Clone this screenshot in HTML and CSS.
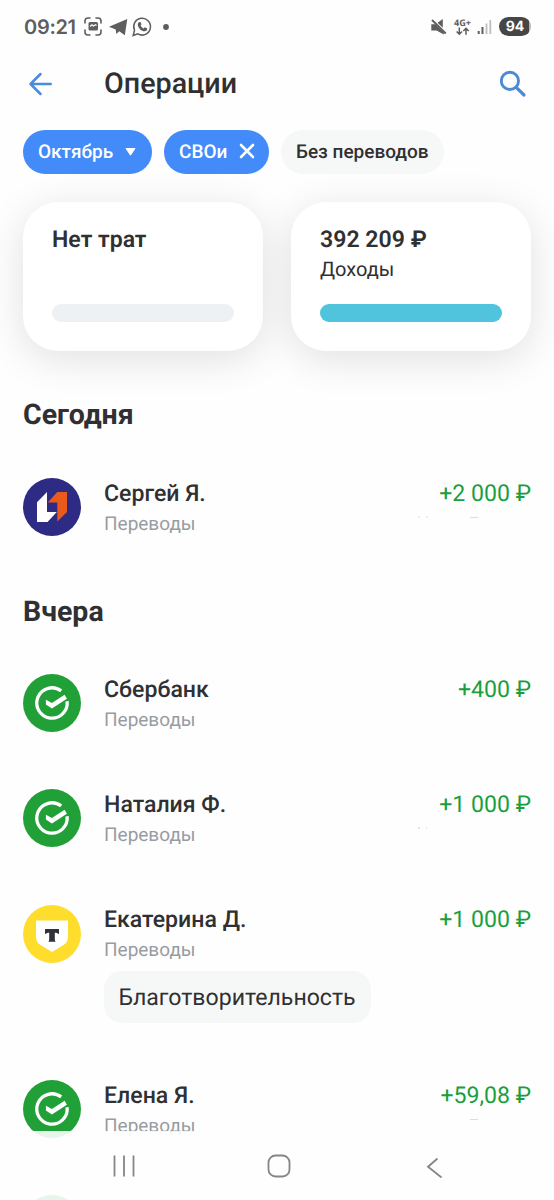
FILE: index.html
```html
<!DOCTYPE html>
<html lang="ru">
<head>
<meta charset="utf-8">
<title>Операции</title>
<link rel="stylesheet" href="styles.css">
</head>
<body>
<svg class="defs" width="0" height="0">
  <symbol id="sber" viewBox="0 0 58 58">
    <circle cx="29" cy="29" r="29" fill="#21a038"/>
    <path d="M38.200 16.900A15.200 15.200 0 1 0 44.100 27.300" fill="none" stroke="#fff" stroke-width="3.300"/>
    <path d="M22.900 25.800v4.800l6 3.800 15-9.700-2.300-4-12.700 8.300z" fill="#fff"/>
    <path d="M39.500 17.200l3.200 2.800" stroke="#21a038" stroke-width="1.200"/>
  </symbol>
</svg>
<div class="screen">
  <div class="status">
    <span class="clock">09:21</span>
    <svg class="status-icons" width="96" height="24" viewBox="0 0 96 24">
      <path d="M2 8V6q0-3 3-3h2M13 3h2q3 0 3 3v2M18 15v2q0 3-3 3h-2M7 20H5q-3 0-3-3v-2" fill="none" stroke="#5e5e5e" stroke-width="1.600" stroke-linecap="round"/>
      <rect x="5.500" y="7" width="9.500" height="8.500" rx="1.500" fill="#5e5e5e"/>
      <path d="M7 11.500l2-1.700 1.500 1.200 2-1.400 1 .9" fill="none" stroke="#fff" stroke-width="1.100"/>
      <path d="M26 11.700L44.300 4 41.800 20.300 36.300 16.200 33.400 19 32.700 14.600z" fill="#5e5e5e"/>
      <path d="M50.200 20.500l1.300-5.200a8.400 8.400 0 1 1 3.300 3.600z" fill="none" stroke="#5e5e5e" stroke-width="1.500"/>
      <path d="M56 7.200c.8-.5 1.600-.2 1.900.5l.6 1.600-.9 1.300c.6 1.300 1.700 2.300 3 2.900l1.200-1.200 2 1c.7.6.4 1.900-.5 2.500-1.100.8-2.700.6-4.500-.4-1.800-1-3.200-2.700-3.800-4.500-.5-1.700-.2-2.900 1-3.700z" fill="#5e5e5e"/>
      <circle cx="83" cy="12" r="2.900" fill="#5e5e5e"/>
    </svg>
    <svg class="status-right" width="75" height="24" viewBox="0 0 75 24">
      <path d="M1.300 9.200h4l8.600 8.400v2L6.500 15.600H1.300zM7.500 7.800L12.800 4v8.700z" fill="#5e5e5e"/>
      <path d="M2 5L15.800 18.500" stroke="#5e5e5e" stroke-width="1.900"/>
      <text x="24" y="10.500" class="net" textLength="17" lengthAdjust="spacingAndGlyphs">4G+</text>
      <path d="M29.300 12.500v6.700M26.600 16.500l2.700 2.700 2.700-2.700M36 19.800v-6.500M33.300 16l2.700-2.700 2.700 2.700" fill="none" stroke="#5e5e5e" stroke-width="1.500"/>
      <path d="M48.700 16V19M52.500 12V19" stroke="#5e5e5e" stroke-width="2"/>
      <path d="M56.500 8.500V19M60.300 5V19" stroke="#bdbdbd" stroke-width="1.800"/>
    </svg>
    <span class="battery">94</span>
  </div>

  <header class="header">
    <svg width="26" height="26" viewBox="0 0 26 26"><path d="M23.700 13H3.500M13.500 3L3.500 13l10 10" fill="none" stroke="#4a8be0" stroke-width="2.500" stroke-linecap="round" stroke-linejoin="round"/></svg>
    <h1>Операции</h1>
    <svg width="28" height="28" viewBox="0 0 28 28"><circle cx="10.900" cy="10.900" r="8.600" fill="none" stroke="#4a8ad6" stroke-width="2.900"/><path d="M17.200 17.300l7.800 7.700" stroke="#4a8ad6" stroke-width="3.200" stroke-linecap="round"/></svg>
  </header>

  <div class="chips">
    <span class="chip active month"><span>Октябрь</span><svg width="11" height="10" viewBox="0 0 11 10"><path d="M1 2.500h9L5.500 9.200z" fill="#fff" stroke="#fff" stroke-linejoin="round"/></svg></span>
    <span class="chip active own"><span>СВОи</span><svg width="16" height="16" viewBox="0 0 16 16"><path d="M2 2l12 12M14 2L2 14" stroke="#fff" stroke-width="2.600" stroke-linecap="round"/></svg></span>
    <span class="chip plain"><span>Без переводов</span></span>
  </div>

  <div class="cards">
    <div class="card"><div class="sum">Нет трат</div><div class="bar"></div></div>
    <div class="card"><div class="sum">392 209 ₽</div><div class="label">Доходы</div><div class="bar income"></div></div>
  </div>

  <h2 class="today">Сегодня</h2>
  <div class="row">
    <svg class="logo" viewBox="0 0 58 58"><circle cx="29" cy="29" r="29" fill="#2d2b83"/><path d="M24 14v20h9.800l-9.300 10H14V24.200z" fill="#fff"/><path d="M34.300 14H44v20L34.300 43.500V24.500H24.800z" fill="#ea5b1b"/></svg>
    <div class="info"><div class="name">Сергей Я.</div><div class="type">Переводы</div></div>
    <div class="money"><div class="amount">+2 000 ₽</div><svg class="trace" width="114" height="4" viewBox="0 0 114 4"><path d="M1 1h2M9 1h2M53 1.500h8" stroke="#ddd"/></svg></div>
  </div>

  <h2 class="yesterday">Вчера</h2>
  <div class="row">
    <svg class="logo"><use href="#sber"/></svg>
    <div class="info"><div class="name">Сбербанк</div><div class="type">Переводы</div></div>
    <div class="money"><div class="amount">+400 ₽</div></div>
  </div>
  <div class="row">
    <svg class="logo"><use href="#sber"/></svg>
    <div class="info"><div class="name">Наталия Ф.</div><div class="type">Переводы</div></div>
    <div class="money"><div class="amount">+1 000 ₽</div><svg class="trace" width="114" height="4" viewBox="0 0 114 4"><path d="M1 1h2M9 1h1" stroke="#ccc"/></svg></div>
  </div>
  <div class="row tagged">
    <svg class="logo" viewBox="0 0 58 58"><circle cx="29" cy="29" r="29" fill="#ffdd2d"/><path d="M13 15.500h32V32q0 5-4.500 8L29 47l-11.500-7Q13 37 13 32z" fill="#fff"/><path d="M22 24h14v5.200q-1.500-1.500-3.200-1.500h-1v6.200q0 1.900.9 2.900h-7.400q.9-1 .9-2.900v-6.200h-1q-1.700 0-3.200 1.500z" fill="#30343a"/></svg>
    <div class="info"><div class="name">Екатерина Д.</div><div class="type">Переводы</div><div class="tag"><span>Благотворительность</span></div></div>
    <div class="money"><div class="amount">+1 000 ₽</div></div>
  </div>
  <div class="row">
    <svg class="logo"><use href="#sber"/></svg>
    <div class="info"><div class="name">Елена Я.</div><div class="type">Переводы</div></div>
    <div class="money"><div class="amount">+59,08 ₽</div><svg class="trace" width="114" height="4" viewBox="0 0 114 4"><path d="M53 1.500h8" stroke="#ddd"/></svg></div>
  </div>
  <div class="row">
    <svg class="logo"><use href="#sber"/></svg>
  </div>

  <nav class="nav">
    <svg width="24" height="24" viewBox="0 0 24 24"><path d="M2.500 1.500v21M12 1.500v21M21.500 1.500v21" stroke="#858585" stroke-width="1.800"/></svg>
    <svg width="24" height="24" viewBox="0 0 24 24"><rect x="1.500" y="1.500" width="21" height="21" rx="7" fill="none" stroke="#858585" stroke-width="1.800"/></svg>
    <svg width="24" height="24" viewBox="0 0 24 24"><path d="M16.500 4.500L7 12.800L20.500 23.500" fill="none" stroke="#858585" stroke-width="1.800"/></svg>
  </nav>
</div>
</body>
</html>
```
FILE: styles.css
```css
* { box-sizing: border-box; }
body { margin: 0; background: #fefefe; color: #303032; font-family: Roboto, "Noto Sans", sans-serif; text-rendering: geometricPrecision; }
svg { display: block; flex: none; }
.defs { position: absolute; }
.screen { position: relative; height: 1200px; overflow: hidden; }

.status { display: flex; align-items: center; height: 53px; padding: 0 23px 0 24px; color: #5e5e5e; }
.clock { width: 52px; font: 600 20px Inter, sans-serif; letter-spacing: -.3px; }
.status-icons { margin-left: 7px; }
.status-right { margin-left: auto; }
.net { font: 700 9px "Open Sans", sans-serif; fill: #5e5e5e; }
.battery { width: 32px; height: 19px; margin-left: -6px; border-radius: 10px; background: linear-gradient(90deg, #464646 94%, #b5b5b5 94%); color: #fff; font: 700 14px/19px Inter, sans-serif; text-align: center; }

.header { display: flex; align-items: center; height: 62px; padding: 0 27px; }
.header h1 { margin: 0 auto 0 51px; font-size: 28.700px; line-height: 34px; font-weight: 500; }

.chips { display: flex; gap: 12px; padding: 15px 23px 0; }
.chip { display: flex; align-items: center; height: 44px; padding: 0 15px 2px; border-radius: 22px; font-size: 19px; font-weight: 500; white-space: nowrap; background: #f6f8f8; }
.chip.active { background: #428bf9; color: #fff; }
.month { width: 129px; justify-content: space-between; padding-right: 16px; }
.own { width: 105px; justify-content: space-between; padding-right: 14px; }
.plain { width: 163px; }

.cards { display: flex; gap: 28px; padding: 28px 23px 0; }
.card { display: flex; flex-direction: column; width: 240px; height: 149px; padding: 23px 29px 29px; border-radius: 35px; background: #fff; box-shadow: 0 8px 40px rgba(0, 0, 0, .12); }
.sum { font-size: 23.100px; line-height: 29px; font-weight: 600; }
.label { font-size: 20px; line-height: 30px; }
.bar { height: 18px; margin-top: auto; border-radius: 9px; background: #eef1f4; }
.bar.income { background: #50c4dd; }

h2 { margin: 0 23px; font-size: 28.500px; line-height: 36px; font-weight: 700; }
.today { margin-top: 46px; }
.yesterday { margin-top: 0; }
.today + .row { margin-top: 45px; }
.yesterday + .row { margin-top: 44px; }

.row { display: flex; height: 115.500px; padding: 0 23px; }
.row.tagged { height: 175px; }
.logo { width: 58px; height: 58px; margin-right: 23px; }
.name, .amount { padding-top: 1px; font-size: 23.100px; line-height: 30px; white-space: nowrap; }
.name { font-weight: 500; }
.tagged .name, .tagged .amount { margin-top: -1px; }
.type { font-size: 19px; line-height: 30px; color: #989ca2; }
.tag { display: flex; align-items: center; justify-content: center; width: 267px; height: 52px; margin-top: 6px; padding: 2px 1px 0 0; border-radius: 18px; background: #f6f8f8; font-size: 23.100px; }
.money { display: flex; flex-direction: column; align-items: flex-end; margin-left: auto; }
.amount { color: #199f3c; }
.trace { margin-top: 7px; }

.nav { position: absolute; inset: 1131px 0 0; display: flex; justify-content: space-between; align-items: center; padding: 0 109px 0 112px; background: rgba(254, 254, 254, .9); }
```
